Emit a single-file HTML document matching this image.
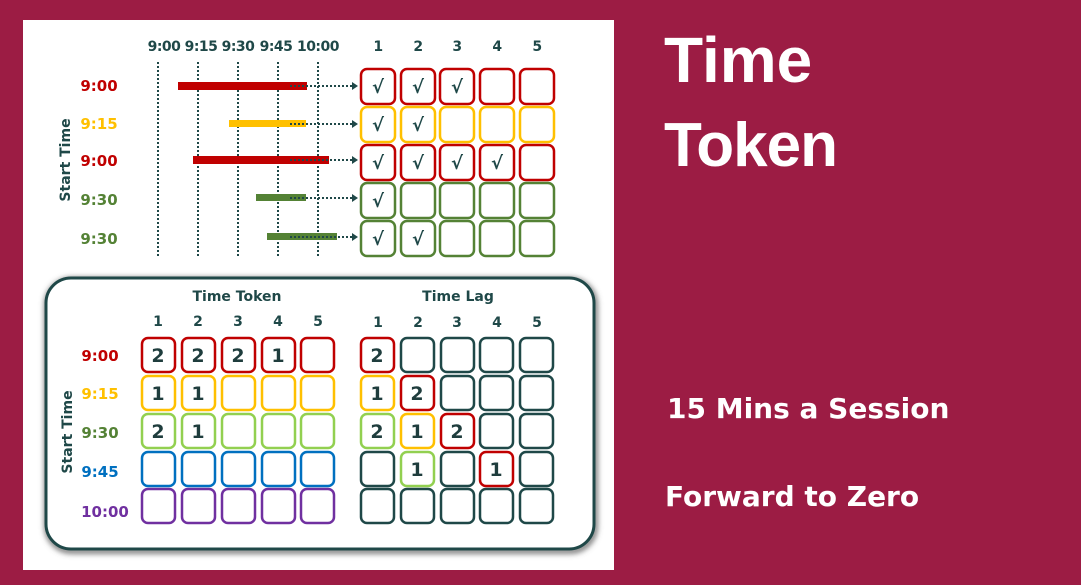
<!DOCTYPE html>
<html><head><meta charset="utf-8"><style>
html,body{margin:0;padding:0;width:1081px;height:585px;overflow:hidden;background:#9c1c44;font-family:"DejaVu Sans","Liberation Sans",sans-serif}
#panel{position:absolute;left:23px;top:20px;width:591px;height:550px;background:#fff}
.t{position:absolute;color:#fff;font-weight:bold;white-space:nowrap}
svg text{font-family:"DejaVu Sans","Liberation Sans",sans-serif;font-weight:bold}
</style></head><body>
<div id="panel"></div>
<svg width="1081" height="585" style="position:absolute;left:0;top:0">
<defs><filter id="sh" x="-5%" y="-5%" width="110%" height="110%"><feGaussianBlur stdDeviation="3"/></filter></defs>
<g fill="#1f4848" font-size="14" text-anchor="middle" style="letter-spacing:-0.5px">
<text x="164" y="51">9:00</text><text x="201" y="51">9:15</text><text x="238" y="51">9:30</text><text x="276" y="51">9:45</text><text x="318" y="51">10:00</text>
<text x="378" y="51">1</text><text x="418" y="51">2</text><text x="457" y="51">3</text><text x="497" y="51">4</text><text x="537" y="51">5</text>
</g>
<g stroke="#1f4848" stroke-width="2" stroke-dasharray="2,2">
<line x1="158" y1="62" x2="158" y2="256"/><line x1="198" y1="62" x2="198" y2="256"/><line x1="238" y1="62" x2="238" y2="256"/><line x1="278" y1="62" x2="278" y2="256"/><line x1="318" y1="62" x2="318" y2="256"/>
</g>
<g font-size="15" text-anchor="middle">
<text x="99" y="91" fill="#c00000">9:00</text><text x="99" y="129" fill="#ffc000">9:15</text><text x="99" y="166" fill="#c00000">9:00</text><text x="99" y="205" fill="#548235">9:30</text><text x="99" y="244" fill="#548235">9:30</text>
</g>
<text x="0" y="0" transform="translate(70,160) rotate(-90)" font-size="14" fill="#1f4848" text-anchor="middle">Start Time</text>
<rect x="178" y="82" width="129" height="8" fill="#c00000"/>
<rect x="229" y="120" width="77" height="7" fill="#ffc000"/>
<rect x="193" y="156" width="136" height="8" fill="#c00000"/>
<rect x="256" y="194" width="50" height="7" fill="#548235"/>
<rect x="267" y="233" width="70" height="7" fill="#548235"/>
<g stroke="#1f4848" stroke-width="2" stroke-dasharray="2,2">
<line x1="290" y1="86" x2="352" y2="86"/><line x1="290" y1="124" x2="352" y2="124"/><line x1="290" y1="160" x2="352" y2="160"/><line x1="290" y1="198" x2="352" y2="198"/><line x1="290" y1="237" x2="352" y2="237"/>
</g>
<g fill="#1f4848"><path d="M352 82l6 4-6 4z"/><path d="M352 120l6 4-6 4z"/><path d="M352 156l6 4-6 4z"/><path d="M352 194l6 4-6 4z"/><path d="M352 233l6 4-6 4z"/></g>
<g fill="none" stroke-width="2.5">
<g stroke="#c00000"><rect x="361" y="69" width="34" height="35" rx="6"/><rect x="401" y="69" width="34" height="35" rx="6"/><rect x="440" y="69" width="34" height="35" rx="6"/><rect x="480" y="69" width="34" height="35" rx="6"/><rect x="520" y="69" width="34" height="35" rx="6"/></g>
<g stroke="#ffc000"><rect x="361" y="107" width="34" height="35" rx="6"/><rect x="401" y="107" width="34" height="35" rx="6"/><rect x="440" y="107" width="34" height="35" rx="6"/><rect x="480" y="107" width="34" height="35" rx="6"/><rect x="520" y="107" width="34" height="35" rx="6"/></g>
<g stroke="#c00000"><rect x="361" y="145" width="34" height="35" rx="6"/><rect x="401" y="145" width="34" height="35" rx="6"/><rect x="440" y="145" width="34" height="35" rx="6"/><rect x="480" y="145" width="34" height="35" rx="6"/><rect x="520" y="145" width="34" height="35" rx="6"/></g>
<g stroke="#548235"><rect x="361" y="183" width="34" height="35" rx="6"/><rect x="401" y="183" width="34" height="35" rx="6"/><rect x="440" y="183" width="34" height="35" rx="6"/><rect x="480" y="183" width="34" height="35" rx="6"/><rect x="520" y="183" width="34" height="35" rx="6"/>
<rect x="361" y="221" width="34" height="35" rx="6"/><rect x="401" y="221" width="34" height="35" rx="6"/><rect x="440" y="221" width="34" height="35" rx="6"/><rect x="480" y="221" width="34" height="35" rx="6"/><rect x="520" y="221" width="34" height="35" rx="6"/></g>
</g>
<g fill="#1f4848" font-size="18" text-anchor="middle" style="font-family:'Liberation Serif',serif;font-weight:normal">
<text x="378" y="93">√</text><text x="418" y="93">√</text><text x="457" y="93">√</text>
<text x="378" y="131">√</text><text x="418" y="131">√</text>
<text x="378" y="169">√</text><text x="418" y="169">√</text><text x="457" y="169">√</text><text x="497" y="169">√</text>
<text x="378" y="207">√</text>
<text x="378" y="245">√</text><text x="418" y="245">√</text>
</g>
<rect x="47" y="280" width="548" height="271" rx="25" fill="none" stroke="#666" stroke-width="5" filter="url(#sh)"/>
<rect x="46" y="278" width="548" height="271" rx="25" fill="#fff" stroke="#1f4848" stroke-width="3"/>
<g fill="#1f4848" font-size="14" text-anchor="middle">
<text x="237" y="301">Time Token</text><text x="458" y="301">Time Lag</text>
</g>
<g fill="#1f4848" font-size="14" text-anchor="middle" style="font-weight:normal">
<text x="158" y="326">1</text><text x="198" y="326">2</text><text x="238" y="326">3</text><text x="278" y="326">4</text><text x="318" y="326">5</text>
<text x="378" y="327">1</text><text x="418" y="327">2</text><text x="457" y="327">3</text><text x="497" y="327">4</text><text x="537" y="327">5</text>
</g>
<g font-size="15" text-anchor="middle">
<text x="100" y="361" fill="#c00000">9:00</text><text x="100" y="399" fill="#ffc000">9:15</text><text x="100" y="438" fill="#548235">9:30</text><text x="100" y="477" fill="#0070c0">9:45</text><text x="105" y="517" fill="#7030a0">10:00</text>
</g>
<text x="0" y="0" transform="translate(72,432) rotate(-90)" font-size="14" fill="#1f4848" text-anchor="middle">Start Time</text>
<g fill="none" stroke-width="2.5">
<g stroke="#c00000"><rect x="142" y="338" width="33" height="34" rx="6"/><rect x="182" y="338" width="33" height="34" rx="6"/><rect x="222" y="338" width="33" height="34" rx="6"/><rect x="262" y="338" width="33" height="34" rx="6"/><rect x="301" y="338" width="33" height="34" rx="6"/></g>
<g stroke="#ffc000"><rect x="142" y="376" width="33" height="34" rx="6"/><rect x="182" y="376" width="33" height="34" rx="6"/><rect x="222" y="376" width="33" height="34" rx="6"/><rect x="262" y="376" width="33" height="34" rx="6"/><rect x="301" y="376" width="33" height="34" rx="6"/></g>
<g stroke="#92d050"><rect x="142" y="414" width="33" height="34" rx="6"/><rect x="182" y="414" width="33" height="34" rx="6"/><rect x="222" y="414" width="33" height="34" rx="6"/><rect x="262" y="414" width="33" height="34" rx="6"/><rect x="301" y="414" width="33" height="34" rx="6"/></g>
<g stroke="#0070c0"><rect x="142" y="452" width="33" height="34" rx="6"/><rect x="182" y="452" width="33" height="34" rx="6"/><rect x="222" y="452" width="33" height="34" rx="6"/><rect x="262" y="452" width="33" height="34" rx="6"/><rect x="301" y="452" width="33" height="34" rx="6"/></g>
<g stroke="#7030a0"><rect x="142" y="489" width="33" height="34" rx="6"/><rect x="182" y="489" width="33" height="34" rx="6"/><rect x="222" y="489" width="33" height="34" rx="6"/><rect x="262" y="489" width="33" height="34" rx="6"/><rect x="301" y="489" width="33" height="34" rx="6"/></g>
<g stroke="#1f4848">
<rect x="401" y="338" width="33" height="34" rx="6"/><rect x="441" y="338" width="33" height="34" rx="6"/><rect x="480" y="338" width="33" height="34" rx="6"/><rect x="520" y="338" width="33" height="34" rx="6"/>
<rect x="441" y="376" width="33" height="34" rx="6"/><rect x="480" y="376" width="33" height="34" rx="6"/><rect x="520" y="376" width="33" height="34" rx="6"/>
<rect x="480" y="414" width="33" height="34" rx="6"/><rect x="520" y="414" width="33" height="34" rx="6"/>
<rect x="361" y="452" width="33" height="34" rx="6"/><rect x="441" y="452" width="33" height="34" rx="6"/><rect x="520" y="452" width="33" height="34" rx="6"/>
<rect x="361" y="489" width="33" height="34" rx="6"/><rect x="401" y="489" width="33" height="34" rx="6"/><rect x="441" y="489" width="33" height="34" rx="6"/><rect x="480" y="489" width="33" height="34" rx="6"/><rect x="520" y="489" width="33" height="34" rx="6"/>
</g>
<g stroke="#c00000"><rect x="361" y="338" width="33" height="34" rx="6"/><rect x="401" y="376" width="33" height="34" rx="6"/><rect x="441" y="414" width="33" height="34" rx="6"/><rect x="480" y="452" width="33" height="34" rx="6"/></g>
<g stroke="#ffc000"><rect x="361" y="376" width="33" height="34" rx="6"/><rect x="401" y="414" width="33" height="34" rx="6"/></g>
<g stroke="#92d050"><rect x="361" y="414" width="33" height="34" rx="6"/><rect x="401" y="452" width="33" height="34" rx="6"/></g>
</g>
<g fill="#1f3d3d" font-size="19" text-anchor="middle">
<text x="158" y="362">2</text><text x="198" y="362">2</text><text x="238" y="362">2</text><text x="278" y="362">1</text>
<text x="158" y="400">1</text><text x="198" y="400">1</text>
<text x="158" y="438">2</text><text x="198" y="438">1</text>
<text x="377" y="362">2</text>
<text x="377" y="400">1</text><text x="417" y="400">2</text>
<text x="377" y="438">2</text><text x="417" y="438">1</text><text x="457" y="438">2</text>
<text x="417" y="476">1</text><text x="496" y="476">1</text>
</g>
</svg>
<div class="t" style="left:664px;top:24px;font-size:64px;line-height:72px;font-family:'Liberation Sans',sans-serif">Time</div>
<div class="t" style="left:664px;top:110px;font-size:62px;line-height:72px;font-family:'Liberation Sans',sans-serif;letter-spacing:-1px">Token</div>
<div class="t" style="left:667px;top:389px;font-size:28px;line-height:40px;font-family:'DejaVu Sans',sans-serif">15 Mins a Session</div>
<div class="t" style="left:665px;top:477px;font-size:28px;line-height:40px;font-family:'DejaVu Sans',sans-serif">Forward to Zero</div>
</body></html>
